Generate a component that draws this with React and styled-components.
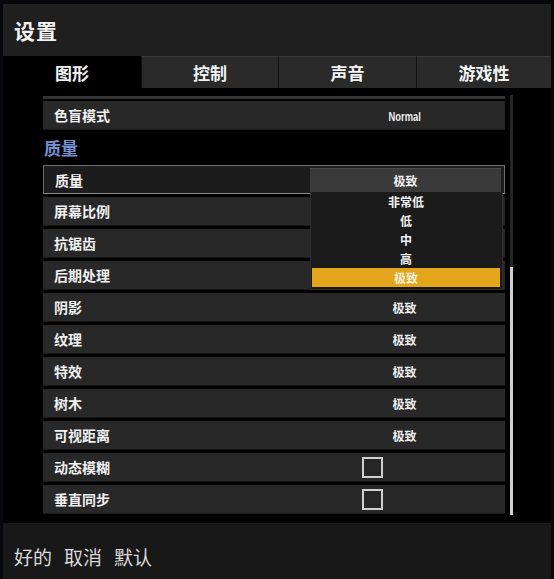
import React from 'react';
import styled, { createGlobalStyle } from 'styled-components';

const GlobalStyle = createGlobalStyle`
  html, body {
    margin: 0;
    padding: 0;
    background: #07080b;
    overflow: hidden;
  }
  * { box-sizing: border-box; }
`;

const CJK = `"Noto Sans CJK SC", "Noto Sans", sans-serif`;

const Frame = styled.div`
  width: 554px;
  height: 579px;
  padding: 4px 3px 0 3px;
  display: flex;
  flex-direction: column;
  font-family: ${CJK};
  color: #f2f2f2;
`;

const Header = styled.div`
  height: 52px;
  background: #1f1f1f;
  display: flex;
  align-items: center;
  padding-left: 11px;
  font-size: 21px;
  font-weight: 700;
  letter-spacing: 1px;
`;

const TabBar = styled.div`
  height: 32px;
  display: grid;
  grid-template-columns: 138px 137px 138px 135px;
`;

const Tab = styled.div`
  display: flex;
  align-items: center;
  justify-content: center;
  font-size: 17px;
  font-weight: 700;
  background: ${p => (p.$active ? '#000' : '#2a2a2a')};
  border-left: ${p => (p.$active ? 'none' : '1px solid #111')};
  border-top: ${p => (p.$active ? 'none' : '1px solid #3a3a3a')};
`;

const Content = styled.div`
  height: 435px;
  background: #000;
  display: flex;
  padding-left: 40px;
  overflow: hidden;
`;

const List = styled.div`
  width: 462px;
  display: flex;
  flex-direction: column;
  padding-top: 8px;
`;

const Sliver = styled.div`
  height: 3px;
  background: #333;
  margin-bottom: 2px;
`;

const Row = styled.div`
  flex: none;
  height: 29px;
  margin-bottom: 3px;
  display: grid;
  grid-template-columns: 266px 191px;
  align-items: center;
  background: ${p => (p.$selected ? '#1c1c1c' : '#282828')};
  border: ${p => (p.$selected ? '1px solid #6c6c6c' : 'none')};
  border-bottom: ${p => (p.$selected ? '1px solid #8a8a8a' : '1px solid #1a1a1a')};
  position: relative;
`;

const Label = styled.div`
  padding-left: 11px;
  font-size: 14px;
  font-weight: 700;
  color: #f0f0f0;
`;

const Value = styled.div`
  text-align: center;
  font-size: 12px;
  font-weight: 700;
  color: #eee;
`;

const Latin = styled.span`
  display: inline-block;
  font-family: "Liberation Sans", sans-serif;
  font-size: 12px;
  font-weight: 700;
  transform: scaleX(0.78);
`;

const SelectBox = styled.div`
  position: relative;
  height: 25px;
  margin-top: 1px;
  background: #3a3a3a;
  border-top: 1px solid #4a4a4a;
  display: flex;
  align-items: center;
  justify-content: center;
  font-size: 12px;
  font-weight: 700;
`;

const Dropdown = styled.div`
  position: absolute;
  top: 23px;
  left: 0;
  width: 193px;
  background: #1b1b1b;
  border: 1px solid #2e2e2e;
  border-top: none;
  display: flex;
  flex-direction: column;
  padding: 0 2px 2px 1px;
  z-index: 5;
`;

const Option = styled.div`
  height: 19px;
  display: flex;
  align-items: center;
  justify-content: center;
  font-size: 12px;
  font-weight: 700;
  background: ${p => (p.$active ? '#e2a51c' : 'transparent')};
  color: ${p => (p.$active ? '#f6f0dc' : '#f2f2f2')};
`;

const SectionTitle = styled.div`
  height: 31px;
  display: flex;
  align-items: center;
  padding: 0 0 3px 1px;
  font-size: 17px;
  font-weight: 700;
  color: #7592cf;
  margin-bottom: 1px;
`;

const Checkbox = styled.div`
  width: 21px;
  height: 21px;
  margin-left: 53px;
  border: 2px solid #cfcfcf;
  background: #262626;
`;

const Track = styled.div`
  width: 3px;
  margin: 7px 0 8px 5px;
  background: #262626;
  display: flex;
  flex-direction: column;
`;

const Thumb = styled.div`
  margin-top: ${p => p.$offset}px;
  flex: 1;
  background: #cfcfcf;
`;

const Footer = styled.div`
  flex: 1;
  background: #181818;
  padding: 22px 0 0 11px;
  display: flex;
  gap: 12px;
  font-size: 19px;
  line-height: 24px;
  color: #dadada;
`;

const qualityRows = [
  ['屏幕比例', ''],
  ['抗锯齿', ''],
  ['后期处理', ''],
  ['阴影', '极致'],
  ['纹理', '极致'],
  ['特效', '极致'],
  ['树木', '极致'],
  ['可视距离', '极致'],
];

const options = ['非常低', '低', '中', '高', '极致'];

export default function App() {
  return (
    <>
      <GlobalStyle />
      <Frame>
        <Header>设置</Header>
        <TabBar>
          <Tab $active>图形</Tab>
          <Tab>控制</Tab>
          <Tab>声音</Tab>
          <Tab>游戏性</Tab>
        </TabBar>
        <Content>
          <List>
            <Sliver />
            <Row>
              <Label>色盲模式</Label>
              <Value><Latin>Normal</Latin></Value>
            </Row>
            <SectionTitle>质量</SectionTitle>
            <Row $selected>
              <Label>质量</Label>
              <SelectBox>
                极致
                <Dropdown>
                  {options.map(o => (
                    <Option key={o} $active={o === '极致'}>{o}</Option>
                  ))}
                </Dropdown>
              </SelectBox>
            </Row>
            {qualityRows.map(([name, val]) => (
              <Row key={name}>
                <Label>{name}</Label>
                <Value>{val}</Value>
              </Row>
            ))}
            <Row>
              <Label>动态模糊</Label>
              <div><Checkbox /></div>
            </Row>
            <Row>
              <Label>垂直同步</Label>
              <div><Checkbox /></div>
            </Row>
          </List>
          <Track>
            <Thumb $offset={172} />
          </Track>
        </Content>
        <Footer>
          <span>好的</span>
          <span>取消</span>
          <span>默认</span>
        </Footer>
      </Frame>
    </>
  );
}
